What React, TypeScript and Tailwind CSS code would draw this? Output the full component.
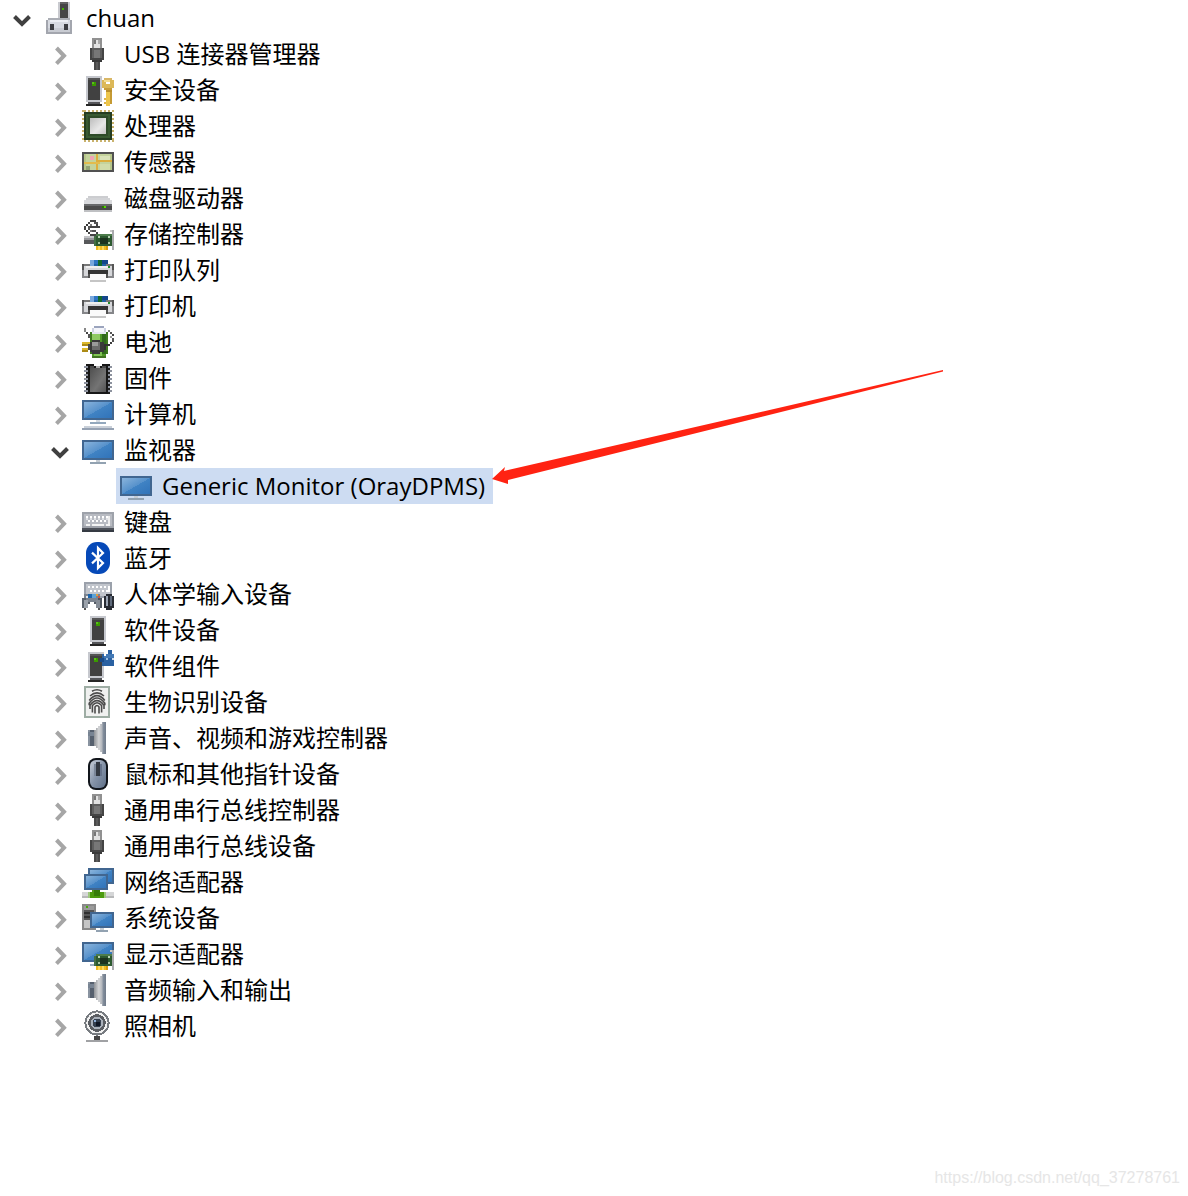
import React, { useState } from "react";

type Px = [number, number, number, number, string];

/* Icons are drawn on a 16 x 16 grid, shown at 32 px. */
function Grid({ px, children }: { px?: Px[]; children?: React.ReactNode }) {
  return (
    <svg viewBox="0 0 16 16" className="h-8 w-8 shrink-0" shapeRendering="crispEdges" aria-hidden="true">
      {px?.map(([x, y, w, h, f], i) => (
        <rect key={i} x={x} y={y} width={w} height={h} fill={f} />
      ))}
      {children}
    </svg>
  );
}

/* Gradients shared by all the icons. */
function Gradients() {
  return (
    <svg className="absolute h-0 w-0" aria-hidden="true">
      <defs>
        <linearGradient id="glass" x1="0" y1="0" x2="1" y2="1">
          <stop offset="0" stopColor="#8ab4dc" />
          <stop offset="0.5" stopColor="#5691cb" />
          <stop offset="0.5" stopColor="#4083c4" />
          <stop offset="1" stopColor="#3173b9" />
        </linearGradient>
        <linearGradient id="silver" x1="0" y1="0" x2="1" y2="1">
          <stop offset="0" stopColor="#bdbdbd" />
          <stop offset="0.6" stopColor="#e8e8e8" />
          <stop offset="1" stopColor="#c4c4c4" />
        </linearGradient>
        <linearGradient id="cone" x1="0" y1="0" x2="1" y2="0">
          <stop offset="0" stopColor="#8f9296" />
          <stop offset="0.4" stopColor="#d4d5d7" />
          <stop offset="0.7" stopColor="#aeb2b8" />
          <stop offset="0.72" stopColor="#8792a0" />
          <stop offset="1" stopColor="#707b8a" />
        </linearGradient>
        <linearGradient id="chip" x1="0" y1="0" x2="1" y2="1">
          <stop offset="0" stopColor="#4f4f4f" />
          <stop offset="0.6" stopColor="#747474" />
          <stop offset="1" stopColor="#545454" />
        </linearGradient>
        <linearGradient id="shell" x1="0" y1="0" x2="1" y2="1">
          <stop offset="0" stopColor="#c9cfd8" />
          <stop offset="0.5" stopColor="#8593a8" />
          <stop offset="1" stopColor="#5f7088" />
        </linearGradient>
      </defs>
    </svg>
  );
}

const screen = (x: number, y: number, w: number, h: number): Px[] => [
  [x, y, w, h, "#416690"],
  [x + 1, y + 1, w - 2, h - 2, "url(#glass)"],
];

const tower = (x: number): Px[] => [
  [x, 1, 8, 13, "#c6c8ce"],
  [x + 1, 2, 6, 11, "#414141"],
  [x + 1, 2, 6, 1, "#555555"],
  [x + 3, 4, 2, 2, "#3a9a00"],
  [x + 3, 4, 1, 1, "#57c414"],
  [x + 1, 14, 6, 1, "#55565a"],
  [x, 15, 8, 1, "#262626"],
];

const card: Px[] = [
  [7, 8, 8, 6, "#2d5a30"],
  [7, 8, 8, 1, "#4d7d4c"],
  [6, 9, 1, 5, "#447044"],
  [9, 10, 4, 3, "#1c341f"],
  [8, 9, 1, 1, "#b9d3b5"],
  [13, 9, 1, 1, "#b9d3b5"],
  [8, 12, 1, 1, "#a5c2a1"],
  [13, 12, 1, 1, "#a5c2a1"],
  [7, 14, 6, 2, "#f0bd21"],
  [8, 14, 1, 2, "#ffda5b"],
  [10, 14, 1, 2, "#ffda5b"],
  [12, 14, 1, 2, "#d99c12"],
  [15, 6, 1, 10, "#a9aaad"],
  [14, 6, 1, 1, "#c9c9c9"],
];

const pc: Px[] = [
  [7, 0, 6, 9, "#c9cacf"],
  [8, 0, 4, 8, "#464646"],
  [8, 0, 4, 1, "#636363"],
  [9, 3, 1, 1, "#43b500"],
  [1, 9, 13, 7, "#a3a6ae"],
  [2, 8, 11, 1, "#abaeb5"],
  [2, 9, 11, 6, "#d7dae1"],
  [3, 9, 9, 1, "#eceef3"],
  [2, 13, 11, 2, "#c8cbd2"],
  [3, 11, 2, 3, "#3d3e42"],
  [10, 11, 2, 3, "#3d3e42"],
];

const usb: Px[] = [
  [5, 0, 5, 5, "#919191"],
  [6, 1, 3, 4, "#e2e2e2"],
  [6, 1, 1, 2, "#777777"],
  [8, 1, 1, 2, "#a9a9a9"],
  [4, 5, 7, 6, "#444444"],
  [5, 5, 5, 5, "#5e5e5e"],
  [6, 6, 3, 4, "#777777"],
  [5, 11, 5, 1, "#393939"],
  [6, 12, 3, 4, "#494949"],
  [7, 12, 1, 4, "#5b5b5b"],
];

const security: Px[] = [
  ...tower(2),
  [11, 2, 4, 1, "#d9b766"],
  [10, 3, 6, 4, "#dcb858"],
  [11, 7, 4, 1, "#c79d3c"],
  [11, 3, 3, 1, "#f3dc93"],
  [12, 4, 2, 1, "#ffffff"],
  [12, 8, 3, 1, "#ba8f2c"],
  [12, 9, 2, 7, "#edc54b"],
  [14, 9, 1, 6, "#c59a33"],
  [11, 12, 1, 1, "#dcb44a"],
  [11, 14, 1, 1, "#dcb44a"],
];

const pins: Px[] = [1, 3, 5, 7, 9, 11, 13, 15].flatMap((n): Px[] => [
  [n, 0, 1, 1, "#c9b26c"],
  [n, 15, 1, 1, "#c9b26c"],
  [0, n - 1, 1, 1, "#c9b26c"],
  [15, n - 1, 1, 1, "#c9b26c"],
]);

const cpu: Px[] = [
  ...pins,
  [1, 1, 14, 14, "#253d22"],
  [2, 2, 12, 12, "#385a32"],
  [3, 3, 10, 10, "#2e4b29"],
  [4, 4, 8, 8, "url(#silver)"],
];

const sensor: Px[] = [
  [0, 3, 16, 10, "#515151"],
  [1, 4, 14, 8, "#b6c68a"],
  [2, 4, 12, 8, "#c4d39c"],
  [9, 5, 5, 2, "#dae3b9"],
  [9, 9, 5, 3, "#d1dcaa"],
  [4, 5, 2, 2, "#f0a4b3"],
  [2, 10, 2, 2, "#93a374"],
  [7, 4, 1, 8, "#dcae3e"],
  [1, 8, 8, 1, "#e2bb4d"],
  [8, 7, 7, 1, "#dcae3e"],
];

const disk: Px[] = [
  [3, 7, 10, 1, "#cccdd0"],
  [2, 8, 12, 1, "#d2d3d6"],
  [1, 9, 14, 2, "#d9dadd"],
  [1, 11, 14, 4, "#bfc0c3"],
  [1, 11, 14, 3, "#4b4b4b"],
  [1, 11, 14, 1, "#68696b"],
  [11, 12, 1, 1, "#55d500"],
  [10, 12, 1, 1, "#287800"],
];

const storage: Px[] = [
  [1, 9, 6, 4, "#c3c4c7"], [1, 10, 5, 1, "#98999c"], [1, 11, 6, 2, "#57585a"],
  [4, 1, 3, 1, "#444444"], [3, 2, 1, 1, "#444444"], [6, 2, 2, 1, "#555555"],
  [2, 3, 1, 1, "#333333"], [4, 3, 1, 1, "#777777"], [7, 3, 1, 1, "#444444"],
  [1, 4, 1, 2, "#444444"], [3, 4, 1, 2, "#555555"], [4, 4, 5, 1, "#444444"],
  [2, 6, 1, 1, "#333333"], [4, 6, 1, 1, "#777777"], [5, 6, 2, 1, "#555555"],
  [3, 7, 1, 1, "#444444"], [7, 7, 1, 1, "#444444"], [4, 8, 3, 1, "#444444"],
  ...card,
];

const printer: Px[] = [
  [4, 3, 9, 3, "#2164a7"], [4, 3, 2, 3, "#79a8dc"], [6, 3, 2, 2, "#2f76c4"],
  [8, 3, 2, 3, "#146a2c"], [10, 3, 3, 2, "#14478b"],
  [1, 5, 3, 1, "#777777"], [12, 5, 3, 1, "#777777"],
  [0, 6, 16, 6, "#858689"], [1, 6, 14, 5, "#d6d7da"],
  [2, 6, 12, 1, "#efefef"], [13, 6, 1, 1, "#248d29"],
  [0, 5, 1, 3, "#555555"], [15, 5, 1, 3, "#555555"],
  [3, 8, 10, 2, "#343434"], [3, 10, 1, 2, "#525252"], [12, 10, 1, 2, "#525252"],
  [4, 10, 8, 3, "#fafafa"], [4, 13, 8, 1, "#c5c5c5"],
];

const battery: Px[] = [
  [6, 0, 5, 1, "#9ba4bd"], [5, 1, 7, 3, "#ced2e2"], [6, 1, 5, 3, "#f4f5fa"],
  [4, 3, 9, 11, "#3e781e"], [5, 3, 7, 1, "#e5e7f0"], [5, 4, 7, 11, "#4f9626"],
  [5, 4, 4, 4, "#8fca61"], [10, 4, 2, 10, "#2f681b"], [5, 15, 7, 1, "#417520"],
  [6, 13, 4, 2, "#80c452"], [1, 1, 1, 2, "#888888"], [2, 3, 1, 1, "#444444"],
  [3, 4, 1, 2, "#555555"], [13, 2, 1, 1, "#777777"], [14, 3, 1, 1, "#555555"],
  [15, 4, 1, 1, "#444444"], [14, 5, 1, 1, "#999999"], [15, 6, 1, 2, "#555555"],
  [14, 8, 1, 1, "#3b3b3b"], [12, 9, 2, 1, "#333333"],
  [0, 8, 4, 1, "#dcb82d"], [0, 11, 4, 1, "#dcb82d"], [0, 9, 3, 1, "#ac8b16"],
  [0, 12, 3, 1, "#ac8b16"], [5, 7, 4, 7, "#393939"], [4, 8, 7, 5, "#393939"],
  [3, 9, 1, 3, "#494949"], [11, 9, 1, 3, "#303030"],
  [5, 8, 4, 4, "#6b6b6b"], [5, 8, 3, 2, "#9a9a9a"],
];

const firmware: Px[] = [
  [3, 1, 10, 15, "#171717"],
  ...[2, 4, 6, 8, 10, 12, 14].flatMap((y): Px[] => [
    [1, y, 2, 1, "#8d929e"], [13, y, 2, 1, "#8d929e"],
    [2, y + 1, 1, 1, "#202020"], [13, y + 1, 1, 1, "#202020"],
  ]),
  [4, 3, 8, 12, "url(#chip)"],
  [4, 2, 2, 1, "#4b4b4b"], [10, 2, 2, 1, "#4b4b4b"], [6, 1, 4, 1, "#ffffff"],
  [7, 2, 2, 1, "#b0b0b0"], [2, 1, 1, 1, "#171717"], [13, 1, 1, 1, "#171717"],
];

const computer: Px[] = [
  ...screen(0, 1, 16, 10), [7, 11, 2, 1, "#d3dae2"], [4, 12, 8, 1, "#93a8bd"],
  [1, 14, 14, 1, "#c9d0d9"], [0, 15, 16, 1, "#96a2b3"],
];

const monitor: Px[] = [
  ...screen(0, 3, 16, 10), [7, 13, 2, 1, "#c5ccd3"], [4, 14, 8, 1, "#92a2b1"],
];

const keyboard: Px[] = [
  [0, 3, 16, 8, "#9ea2aa"], [1, 4, 14, 6, "#b8bbc2"],
  ...[2, 4, 6, 8, 10, 12].flatMap((x): Px[] => [
    [x, 5, 1, 1, "#ffffff"], [x + 1, 7, 1, 1, "#ffffff"], [x, 6, 1, 1, "#dfe1e5"],
  ]),
  [13, 5, 1, 4, "#eeeeee"], [2, 9, 2, 1, "#f4f4f4"],
  [5, 9, 6, 1, "#f4f4f4"], [12, 9, 2, 1, "#f4f4f4"],
  [0, 11, 16, 2, "#353a43"], [0, 11, 16, 1, "#4d5159"],
];

const hid: Px[] = [
  [1, 2, 14, 8, "#9ba1ab"], [2, 3, 12, 6, "#c1c5cc"],
  ...[3, 5, 7, 9, 11].flatMap((x): Px[] => [
    [x, 4, 1, 1, "#ffffff"], [x + 1, 6, 1, 1, "#ffffff"],
  ]),
  [13, 4, 1, 3, "#ffffff"],
  [1, 8, 8, 4, "#7c848f"], [0, 10, 2, 5, "#5b636d"], [8, 10, 2, 5, "#4f5761"],
  [1, 11, 2, 4, "#9aa1aa"], [7, 11, 2, 4, "#868d96"], [3, 12, 1, 1, "#565d66"],
  [6, 12, 1, 1, "#565d66"], [2, 9, 1, 1, "#e8e8e8"], [3, 8, 2, 2, "#1d65ac"],
  [5, 8, 2, 2, "#5da3d6"], [7, 8, 1, 1, "#e2a13a"], [8, 9, 1, 1, "#d4533c"],
  [1, 15, 1, 1, "#555555"], [8, 15, 1, 1, "#555555"],
  [11, 9, 5, 6, "#282c34"], [12, 8, 3, 8, "#282c34"], [12, 9, 1, 5, "#9aa4b3"],
  [14, 9, 1, 5, "#606b7c"],
];

const component: Px[] = [
  ...tower(3), [10, 2, 6, 6, "#2a61a2"], [13, 0, 2, 3, "#2a61a2"],
  [11, 2, 5, 2, "#4379b5"], [9, 4, 2, 2, "#194b88"],
  [11, 2, 1, 1, "#ffffff"], [15, 4, 1, 1, "#cfdded"], [12, 4, 1, 1, "#9dbfe0"],
];

const network: Px[] = [
  ...screen(3, 1, 13, 8), ...screen(1, 4, 12, 8), [0, 13, 16, 2, "#d5d6d7"],
  [0, 15, 16, 1, "#b6b7b8"], [3, 13, 9, 3, "#9dc77c"], [5, 12, 4, 1, "#58951e"],
  [4, 13, 7, 3, "#4c9b0e"], [6, 12, 3, 3, "#367c08"],
];

const system: Px[] = [
  [0, 1, 7, 13, "#898989"], [1, 2, 5, 11, "#555555"], [1, 2, 5, 2, "#9b9b9b"],
  [2, 2, 1, 1, "#44a80b"], [1, 5, 5, 1, "#303030"], [1, 7, 3, 1, "#303030"],
  [1, 9, 3, 4, "#c5c5c5"], ...screen(4, 5, 12, 8), [9, 13, 2, 1, "#c4cbd2"],
  [7, 14, 6, 1, "#92a2b1"],
];

const display: Px[] = [
  ...screen(0, 2, 16, 10), [4, 13, 3, 1, "#9fb0c1"], ...card,
];

function Bluetooth() {
  return (
    <Grid>
      <g shapeRendering="geometricPrecision">
        <rect x="2" y="0" width="12" height="16" rx="5.5" fill="#0649b8" />
        <path d="M5 5.300L10.500 10.500L8 13V3L10.500 5.500L5 10.700" fill="none" stroke="#ffffff" strokeWidth="1.100" />
      </g>
    </Grid>
  );
}

function Fingerprint() {
  return (
    <Grid px={[[1, 0, 13, 16, "#9eada4"], [2, 1, 11, 14, "#f0f1f0"]]}>
      <g shapeRendering="geometricPrecision" fill="none" stroke="#4c4c4c" strokeWidth="0.800">
        <path d="M5 2.600Q7.500 1.200 10 2.600" />
        <path d="M4 5Q7.500 1.800 11 5" />
        <path d="M3.600 7.200Q7.500 2.400 11.400 7.200" />
        <path d="M3.600 9.600V8.600Q7.500 3.400 11.400 8.600V9.600" />
        <path d="M4 11.500V9.600Q7.500 5 11 9.600V11.500" />
        <path d="M5.200 13.200V9.800Q7.500 7 9.800 9.800V13.200" />
        <path d="M6.500 13.800V10.500Q7.500 9 8.500 10.500V13.800" />
      </g>
    </Grid>
  );
}

function Speaker() {
  return (
    <Grid px={[[3, 4, 3, 8, "#56606e"], [3, 4, 1, 8, "#8993a0"], [3, 5, 3, 2, "#788493"]]}>
      <path d="M6 4H7V3H8V2H9V1H10V0H12V16H10V15H9V14H8V13H7V12H6Z" fill="url(#cone)" />
    </Grid>
  );
}

function Mouse() {
  return (
    <Grid>
      <g shapeRendering="geometricPrecision">
        <rect x="3" y="0" width="10" height="16" rx="4" fill="#11151b" />
        <rect x="4" y="1" width="8" height="14" rx="3" fill="url(#shell)" />
      </g>
      <rect x="7" y="2" width="2" height="7" fill="#343941" />
      <rect x="6" y="3" width="1" height="6" fill="#7c8798" />
      <rect x="9" y="3" width="1" height="6" fill="#65728a" />
    </Grid>
  );
}

function Camera() {
  return (
    <Grid>
      <circle cx="7.5" cy="6.5" r="6.3" fill="#777b80" />
      <circle cx="7.5" cy="6.5" r="5.3" fill="#f0f0f0" />
      <circle cx="7.5" cy="6.5" r="4.400" fill="#5a5d62" />
      <circle cx="7.5" cy="6.5" r="3.1" fill="#a9b0ba" />
      <circle cx="7.5" cy="6.5" r="2.2" fill="#35404f" />
      <rect x="7" y="6" width="2" height="2" fill="#101726" />
      <rect x="6" y="5" width="1" height="1" fill="#8fb0da" />
      <rect x="6" y="13" width="3" height="2" fill="#454545" />
      <rect x="2" y="15" width="11" height="1" fill="#a0a1a4" />
    </Grid>
  );
}

function Chevron({ open }: { open: boolean }) {
  return (
    <svg viewBox="0 0 24 24" className="h-6 w-6" fill="none" strokeWidth="4" aria-hidden="true">
      {open ? (
        <path d="M4.500 10.500L12 18L19.500 10.500" stroke="#404040" />
      ) : (
        <path d="M8.500 6L16 13.800L8.500 21.600" stroke="#a6a6a6" />
      )}
    </svg>
  );
}

type Item = { label: string; icon: React.ReactNode; open?: boolean; child?: string };

const items: Item[] = [
  { label: "USB 连接器管理器", icon: <Grid px={usb} /> },
  { label: "安全设备", icon: <Grid px={security} /> },
  { label: "处理器", icon: <Grid px={cpu} /> },
  { label: "传感器", icon: <Grid px={sensor} /> },
  { label: "磁盘驱动器", icon: <Grid px={disk} /> },
  { label: "存储控制器", icon: <Grid px={storage} /> },
  { label: "打印队列", icon: <Grid px={printer} /> },
  { label: "打印机", icon: <Grid px={printer} /> },
  { label: "电池", icon: <Grid px={battery} /> },
  { label: "固件", icon: <Grid px={firmware} /> },
  { label: "计算机", icon: <Grid px={computer} /> },
  { label: "监视器", icon: <Grid px={monitor} />, open: true, child: "Generic Monitor (OrayDPMS)" },
  { label: "键盘", icon: <Grid px={keyboard} /> },
  { label: "蓝牙", icon: <Bluetooth /> },
  { label: "人体学输入设备", icon: <Grid px={hid} /> },
  { label: "软件设备", icon: <Grid px={tower(4)} /> },
  { label: "软件组件", icon: <Grid px={component} /> },
  { label: "生物识别设备", icon: <Fingerprint /> },
  { label: "声音、视频和游戏控制器", icon: <Speaker /> },
  { label: "鼠标和其他指针设备", icon: <Mouse /> },
  { label: "通用串行总线控制器", icon: <Grid px={usb} /> },
  { label: "通用串行总线设备", icon: <Grid px={usb} /> },
  { label: "网络适配器", icon: <Grid px={network} /> },
  { label: "系统设备", icon: <Grid px={system} /> },
  { label: "显示适配器", icon: <Grid px={display} /> },
  { label: "音频输入和输出", icon: <Speaker /> },
  { label: "照相机", icon: <Camera /> },
];

function Row({ label, icon, open, onToggle }: { label: string; icon: React.ReactNode; open: boolean; onToggle: () => void }) {
  return (
    <button type="button" aria-expanded={open} onClick={onToggle} className="flex h-9 items-center gap-2.5 whitespace-nowrap">
      <Chevron open={open} />
      {icon}
      <span>{label}</span>
    </button>
  );
}

function Branch({ item }: { item: Item }) {
  const [open, setOpen] = useState(!!item.open);
  return (
    <li>
      <Row label={item.label} icon={item.icon} open={open} onToggle={() => setOpen(!open)} />
      {open && item.child && (
        <ul className="pl-[68px]">
          <li className="flex">
            <button type="button" className="relative flex h-9 items-center gap-2.5 bg-[#cddcf2] pr-2 pl-1 whitespace-nowrap">
              <Grid px={monitor} />
              <span>{item.child}</span>
              <svg viewBox="0 0 452 114" className="absolute bottom-5 left-full -ml-0.5 h-[114px] w-[452px]" aria-hidden="true">
                <path d="M1 109L14 97L13 101L452 0L452 1.500L17 110L17 114Z" fill="#ff2312" />
              </svg>
            </button>
          </li>
        </ul>
      )}
    </li>
  );
}

export default function App() {
  const [open, setOpen] = useState(true);
  return (
    <div className="flex min-h-screen flex-col bg-white font-['Open_Sans','Noto_Sans_CJK_SC',sans-serif] text-2xl leading-9 text-black">
      <Gradients />
      <main className="pl-2.5">
        <Row label="chuan" icon={<Grid px={pc} />} open={open} onToggle={() => setOpen(!open)} />
        {open && (
          <ul className="pl-[38px]">
            {items.map((item) => (
              <Branch key={item.label} item={item} />
            ))}
          </ul>
        )}
      </main>
      <footer className="mt-auto flex justify-end px-2 pb-1.5 font-['Liberation_Sans',sans-serif] text-base leading-6 text-[#e6e6e6]">
        https://blog.csdn.net/qq_37278761
      </footer>
    </div>
  );
}
